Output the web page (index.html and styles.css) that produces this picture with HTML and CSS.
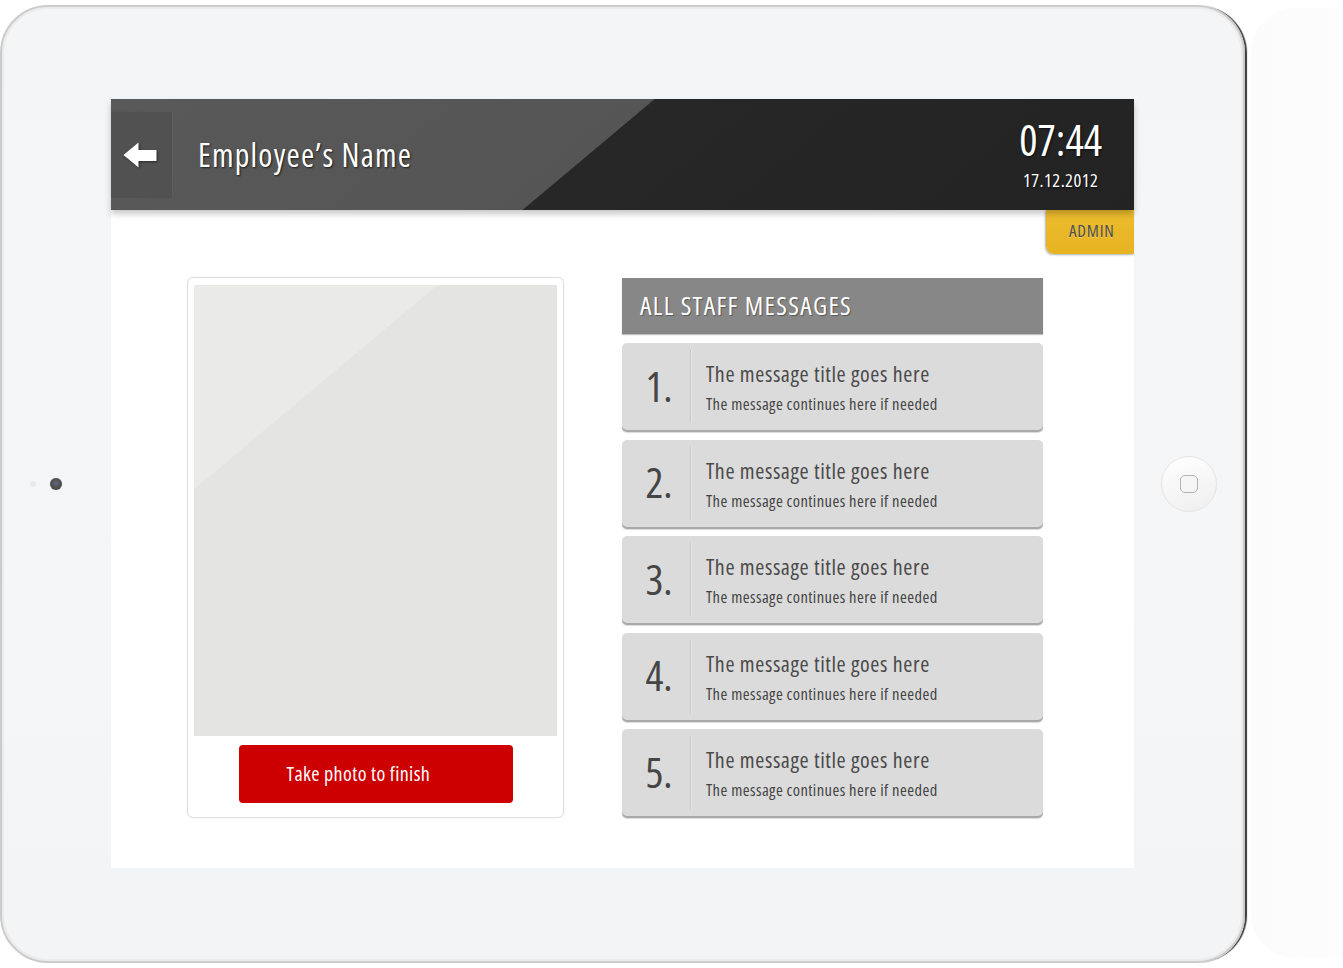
FILE: index.html
```html
<!DOCTYPE html>
<html lang="en">
<head>
<meta charset="utf-8">
<title>Employee Messages</title>
<link rel="stylesheet" href="styles.css">
</head>
<body>
<div class="stage">
  <div class="device">
    <div class="bezel bezel-left">
      <span class="sensor"></span>
      <span class="camera"></span>
    </div>
    <div class="screen">
      <header class="topbar">
        <button class="back" aria-label="Back">
          <svg width="34" height="26" viewBox="0 0 34 26"><path d="M0.5 13 L15.5 0.5 L15.5 8 L33.5 8 L33.5 19 L15.5 19 L15.5 25.5 Z" fill="#fff"/></svg>
        </button>
        <h1 class="name">Employee’s Name</h1>
        <div class="clock">
          <div class="time">07:44</div>
          <div class="date">17.12.2012</div>
        </div>
      </header>
      <main class="content">
        <span class="admin">ADMIN</span>
        <section class="photo-card">
          <div class="photo"></div>
          <button class="take">Take photo to finish</button>
        </section>
        <section class="messages">
          <h2 class="messages-head">ALL STAFF MESSAGES</h2>
          <ul class="msg-list">
            <li class="msg"><span class="num">1.</span><div class="msg-text"><div class="msg-title">The message title goes here</div><div class="msg-sub">The message continues here if needed</div></div></li>
            <li class="msg"><span class="num">2.</span><div class="msg-text"><div class="msg-title">The message title goes here</div><div class="msg-sub">The message continues here if needed</div></div></li>
            <li class="msg"><span class="num">3.</span><div class="msg-text"><div class="msg-title">The message title goes here</div><div class="msg-sub">The message continues here if needed</div></div></li>
            <li class="msg"><span class="num">4.</span><div class="msg-text"><div class="msg-title">The message title goes here</div><div class="msg-sub">The message continues here if needed</div></div></li>
            <li class="msg"><span class="num">5.</span><div class="msg-text"><div class="msg-title">The message title goes here</div><div class="msg-sub">The message continues here if needed</div></div></li>
          </ul>
        </section>
      </main>
    </div>
    <div class="bezel bezel-right">
      <span class="home"><span class="home-sq"></span></span>
    </div>
  </div>
  <div class="reflection"></div>
</div>
</body>
</html>
```
FILE: styles.css
```css
html, body {
  margin: 0;
  padding: 0;
  background: #ffffff;
}
body {
  font-family: "Open Sans", "Liberation Sans", Arial, sans-serif;
  font-stretch: 75%;
}
.stage {
  display: flex;
  align-items: flex-start;
  padding-top: 5px;
}
.device {
  display: flex;
  width: 1241px;
  height: 954px;
  box-sizing: content-box;
  border: 2px solid #cbcbcb;
  border-radius: 48px;
  background: linear-gradient(180deg, #f4f5f6 0%, #f5f6f7 60%, #f3f4f5 100%);
  box-shadow: inset 0 0 0 2px #ebebeb, 3px 0 1px -1px #3a3a3a;
}
.bezel {
  width: 109px;
  display: flex;
  align-items: center;
}
.bezel-left {
  padding-left: 28px;
  box-sizing: border-box;
  gap: 14px;
}
.sensor {
  width: 6px;
  height: 6px;
  border-radius: 50%;
  background: #e9e9ea;
}
.camera {
  width: 12px;
  height: 12px;
  border-radius: 50%;
  background: radial-gradient(circle at 50% 45%, #5a5f78 0 2px, #555 3px, #4a4a4a 6px);
  box-shadow: 0 0 1px rgba(0,0,0,.4);
}
.bezel-right {
  justify-content: center;
}
.home {
  width: 56px;
  height: 56px;
  border-radius: 50%;
  box-sizing: border-box;
  border: 1px solid #e4e4e4;
  background: linear-gradient(160deg, #ffffff 0%, #f7f7f7 50%, #eeeeee 100%);
  display: flex;
  align-items: center;
  justify-content: center;
}
.home-sq {
  width: 18px;
  height: 18px;
  box-sizing: border-box;
  border: 1.5px solid #b3b3b3;
  border-radius: 5px;
  background: #f6f6f6;
}
.screen {
  width: 1023px;
  height: 769px;
  margin-top: 92px;
  background: #ffffff;
  display: flex;
  flex-direction: column;
}
.topbar {
  height: 111px;
  flex: none;
  display: flex;
  align-items: center;
  background: linear-gradient(140deg, #595959 0, #555555 349px, #272727 350px, #232323 100%);
  box-shadow: 0 4px 6px rgba(0,0,0,.22);
  position: relative;
  z-index: 2;
}
.back {
  width: 61px;
  height: 87px;
  border: 0;
  margin: 0;
  background: #515151;
  box-shadow: inset 0 1px 0 rgba(255,255,255,.04), 1px 0 0 rgba(255,255,255,.03);
  display: flex;
  align-items: center;
  justify-content: flex-start;
  padding: 0 0 0 12px;
  box-sizing: border-box;
}
.back svg {
  filter: drop-shadow(1px 1px 1px rgba(0,0,0,.5));
}
.name {
  margin: 0 0 0 26px;
  font-weight: normal;
  font-size: 32px;
  letter-spacing: 1.2px;
  line-height: 36px;
  color: #ffffff;
  text-shadow: 1px 1px 2px rgba(0,0,0,.7);
  flex: 1;
}
.clock {
  align-self: flex-start;
  padding-top: 20px;
  padding-right: 32px;
  text-align: center;
  color: #ffffff;
  text-shadow: 1px 1px 2px rgba(0,0,0,.7);
}
.time {
  font-size: 43px;
  line-height: 42px;
}
.date {
  margin-top: 9px;
  font-size: 18.5px;
  letter-spacing: 0.4px;
  line-height: 20px;
}
.content {
  position: relative;
  flex: 1;
  display: flex;
  align-items: flex-start;
  padding: 67px 0 0 76px;
}
.admin {
  position: absolute;
  top: 0;
  right: 0;
  width: 88px;
  height: 44px;
  box-sizing: border-box;
  padding: 10px 0 0 23px;
  font-size: 17px;
  letter-spacing: 0.8px;
  line-height: 21px;
  color: #4e4e4e;
  text-shadow: 0 1px 0 rgba(255,255,255,.35);
  background: linear-gradient(180deg, #ecbd2e 0%, #e6b322 100%);
  border-bottom-left-radius: 8px;
  box-shadow: -1px 1px 2px rgba(0,0,0,.3);
  z-index: 1;
}
.photo-card {
  width: 377px;
  box-sizing: border-box;
  border: 1px solid #dddddd;
  border-radius: 6px;
  padding: 7px 6px 14px;
  background: #ffffff;
  box-shadow: 0 0 2px rgba(0,0,0,.06);
  display: flex;
  flex-direction: column;
  align-items: center;
}
.photo {
  width: 363px;
  height: 451px;
  background: linear-gradient(140deg, #eaeae9 156px, #e4e4e3 157px);
}
.take {
  margin-top: 9px;
  width: 274px;
  height: 58px;
  border: 0;
  border-radius: 4px;
  background: #cc0000;
  color: #ffffff;
  font-family: inherit;
  font-stretch: inherit;
  font-size: 20px;
  letter-spacing: 0.4px;
  text-align: left;
  padding: 0 0 2px 48px;
}
.messages {
  width: 421px;
  margin-left: 58px;
  margin-top: 1px;
}
.messages-head {
  margin: 0;
  height: 56px;
  box-sizing: border-box;
  display: flex;
  align-items: center;
  padding: 0 0 2px 18px;
  background: #878787;
  box-shadow: 0 1px 1px rgba(0,0,0,.25);
  color: #ffffff;
  font-weight: normal;
  font-size: 26px;
  letter-spacing: 1.3px;
  line-height: 28px;
  text-shadow: 1px 1px 1px rgba(0,0,0,.35);
}
.msg-list {
  list-style: none;
  margin: 9px 0 0;
  padding: 0;
  display: flex;
  flex-direction: column;
  gap: 7.5px;
}
.msg {
  height: 89px;
  box-sizing: border-box;
  display: flex;
  background: #dbdbdb;
  border-radius: 5px;
  box-shadow: inset 0 -2px 0 #a9a9a9, 0 1px 1px rgba(0,0,0,.15);
}
.num {
  width: 68px;
  flex: none;
  display: flex;
  align-items: center;
  justify-content: center;
  padding: 0 0 4px 6px;
  box-sizing: border-box;
  font-size: 42px;
  line-height: 42px;
  color: #454545;
}
.msg-text {
  margin: 7px 0 9px;
  border-left: 1px solid #c7c7c7;
  box-shadow: inset 1px 0 0 #e8e8e8;
  padding: 10px 0 0 15px;
  color: #4a4a4a;
  flex: 1;
}
.msg-title {
  font-size: 22px;
  letter-spacing: 0.6px;
  line-height: 26px;
}
.msg-sub {
  margin-top: 6px;
  font-size: 16.5px;
  letter-spacing: 0.42px;
  line-height: 24px;
  color: #444444;
}
.reflection {
  width: 92px;
  height: 950px;
  margin-left: 6px;
  margin-top: 3px;
  border-radius: 44px 0 0 44px;
  background: linear-gradient(90deg, #fbfbfb 0%, #fdfdfd 100%);
}
```
